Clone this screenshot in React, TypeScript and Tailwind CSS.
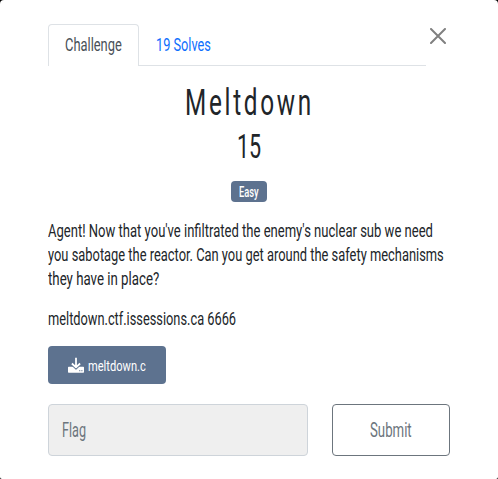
import { useLayoutEffect, useRef, useState } from "react";

type CondensedProps = {
  children: string;
  width: number;
  className?: string;
};

// Sets one line of text in a condensed face, fitted to the given width.
function Condensed({ children, width, className = "" }: CondensedProps) {
  const ref = useRef<HTMLSpanElement>(null);
  const [scale, setScale] = useState(0.75);

  useLayoutEffect(() => {
    if (ref.current) setScale(width / ref.current.offsetWidth);
  }, [width, children]);

  return (
    <span className={`block ${className}`} style={{ width }}>
      <span
        ref={ref}
        className="inline-block origin-left whitespace-nowrap"
        style={{ transform: `scaleX(${scale})` }}
      >
        {children}
      </span>
    </span>
  );
}

export default function App() {
  return (
    <div className="h-[479px] w-[498px] overflow-hidden bg-black font-['Roboto',sans-serif] text-[#212529]">
      <div className="h-full overflow-hidden rounded-t-[4px] rounded-b-[2px] bg-white px-12 pt-6">
        <div className="flex">
          <nav className="flex h-[42px] w-[378px] text-[19px] leading-6 font-[440]">
            <a className="h-[42px] w-[91px] rounded-t border border-b-0 border-[#dee2e6] px-4 pt-2 text-[#495057]">
              <Condensed width={57}>Challenge</Condensed>
            </a>
            <a className="flex-1 border-b border-[#dee2e6] pl-[17px] pt-[9px] text-[#0d6efd]">
              <Condensed width={55}>19 Solves</Condensed>
            </a>
          </nav>
          <button className="ml-1 mt-1 h-4 w-4" aria-label="Close">
            <svg viewBox="0 0 16 16" className="h-4 w-4" fill="none" stroke="#808080" strokeWidth="2" strokeLinecap="round">
              <path d="M1 1l14 14M15 1L1 15" />
            </svg>
          </button>
        </div>

        <h2 className="mt-[17px] flex justify-center text-[36px] leading-[40px]">
          <Condensed width={129} className="tracking-[4px] font-[430]">Meltdown</Condensed>
        </h2>
        <h3 className="mt-1 flex justify-center text-[34px] leading-[38px]">
          <Condensed width={24} className="font-[430]">15</Condensed>
        </h3>
        <div className="mt-4 flex justify-center">
          <div className="flex h-[21px] w-9 justify-center rounded bg-[#5d728f] text-[14px] leading-[22px] font-medium text-white">
            <Condensed width={20}>Easy</Condensed>
          </div>
        </div>

        <div className="mt-[17px] text-[19px] leading-6 font-[440]">
          <Condensed width={385}>Agent! Now that you've infiltrated the enemy's nuclear sub we need</Condensed>
          <Condensed width={396}>you sabotage the reactor. Can you get around the safety mechanisms</Condensed>
          <Condensed width={111}>they have in place?</Condensed>
          <Condensed width={188} className="mt-4">meltdown.ctf.issessions.ca 6666</Condensed>
        </div>

        <a className="mt-[15px] flex h-[38px] w-[118px] items-center rounded bg-[#5d728f] pl-5 text-[15.5px] leading-5 text-white">
          <svg viewBox="0 0 16 16" className="h-4 w-4" fill="none">
            <path d="M.7 9.800H5l3 2.600 3-2.600h4.300q.7 0 .7.700v4.500q0 .7-.7.700H.7q-.7 0-.7-.7v-4.500q0-.7.7-.7z" fill="white" />
            <path d="M8 1v9.300M3.900 6.700L8 10.600l4.100-3.900" stroke="#5d728f" strokeWidth="3.200" />
            <path d="M8 .8v9.300M3.900 6.500L8 10.400l4.100-3.900" stroke="white" strokeWidth="1.800" strokeLinejoin="round" />
            <circle cx="11.800" cy="13.700" r=".6" fill="#5d728f" />
            <circle cx="13.900" cy="13.700" r=".6" fill="#5d728f" />
          </svg>
          <Condensed width={58} className="ml-1 pt-0.5">meltdown.c</Condensed>
        </a>

        <div className="mt-5 flex gap-6 text-[19.5px] leading-6 text-[#6c757d]">
          <div className="flex h-[52px] w-[260px] items-center rounded border border-[#ced4da] bg-[#efefef] px-[13px] pt-0.5">
            <Condensed width={24}>Flag</Condensed>
          </div>
          <button className="flex h-[52px] w-[118px] items-center justify-center rounded border border-[#6c757d] pt-0.5 text-left">
            <Condensed width={42}>Submit</Condensed>
          </button>
        </div>
      </div>
    </div>
  );
}
